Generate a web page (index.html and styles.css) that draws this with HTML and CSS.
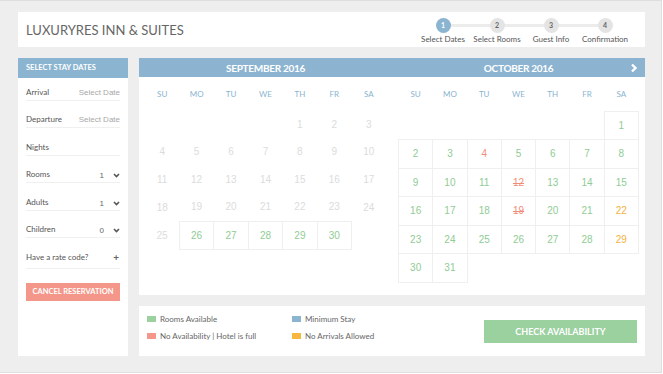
FILE: index.html
```html
<!DOCTYPE html>
<html lang="en">
<head>
  <meta charset="UTF-8">
  <title>LuxuryRes Inn &amp; Suites</title>
  <link rel="stylesheet" href="styles.css">
</head>
<body>
  <div class="page">
    <div class="header">
      <h1>LUXURYRES INN &amp; SUITES</h1>
      <div class="steps">
        <div class="step active"><span class="dot">1</span><span class="step-label">Select Dates</span></div>
        <div class="step"><span class="dot">2</span><span class="step-label">Select Rooms</span></div>
        <div class="step"><span class="dot">3</span><span class="step-label">Guest Info</span></div>
        <div class="step"><span class="dot">4</span><span class="step-label">Confirmation</span></div>
      </div>
    </div>

    <div class="main">
      <div class="sidebar">
        <div class="sidebar-title">SELECT STAY DATES</div>
        <div class="fields">
          <div class="field"><span>Arrival</span><span class="placeholder">Select Date</span></div>
          <div class="field"><span>Departure</span><span class="placeholder">Select Date</span></div>
          <div class="field"><span>Nights</span></div>
          <div class="field"><span>Rooms</span><span class="select">1 <svg width="7" height="5" viewBox="0 0 7 5"><path d="M1 1 L3.5 3.5 L6 1" fill="none" stroke="#555" stroke-width="1.6"/></svg></span></div>
          <div class="field"><span>Adults</span><span class="select">1 <svg width="7" height="5" viewBox="0 0 7 5"><path d="M1 1 L3.5 3.5 L6 1" fill="none" stroke="#555" stroke-width="1.6"/></svg></span></div>
          <div class="field"><span>Children</span><span class="select">0 <svg width="7" height="5" viewBox="0 0 7 5"><path d="M1 1 L3.5 3.5 L6 1" fill="none" stroke="#555" stroke-width="1.6"/></svg></span></div>
          <div class="field rate"><span>Have a rate code?</span><span class="plus">+</span></div>
          <button class="cancel">CANCEL RESERVATION</button>
        </div>
      </div>

      <div class="content">
        <div class="calendar">
          <div class="month">
            <div class="month-title"><span></span><span>SEPTEMBER 2016</span><span></span></div>
            <table class="days">
              <thead>
                <tr><th>SU</th><th>MO</th><th>TU</th><th>WE</th><th>TH</th><th>FR</th><th>SA</th></tr>
              </thead>
              <tbody>
                <tr><td></td><td></td><td></td><td></td><td class="off">1</td><td class="off">2</td><td class="off">3</td></tr>
                <tr><td class="off">4</td><td class="off">5</td><td class="off">6</td><td class="off">7</td><td class="off">8</td><td class="off">9</td><td class="off">10</td></tr>
                <tr><td class="off">11</td><td class="off">12</td><td class="off">13</td><td class="off">14</td><td class="off">15</td><td class="off">16</td><td class="off">17</td></tr>
                <tr><td class="off">18</td><td class="off">19</td><td class="off">20</td><td class="off">21</td><td class="off">22</td><td class="off">23</td><td class="off">24</td></tr>
                <tr><td class="off">25</td><td class="ok">26</td><td class="ok">27</td><td class="ok">28</td><td class="ok">29</td><td class="ok">30</td><td></td></tr>
              </tbody>
            </table>
          </div>
          <div class="month">
            <div class="month-title"><span></span><span>OCTOBER 2016</span><span class="next"><svg width="8" height="10" viewBox="0 0 8 10"><path d="M2 1.5 L5.5 5 L2 8.5" fill="none" stroke="#fff" stroke-width="2.4"/></svg></span></div>
            <table class="days">
              <thead>
                <tr><th>SU</th><th>MO</th><th>TU</th><th>WE</th><th>TH</th><th>FR</th><th>SA</th></tr>
              </thead>
              <tbody>
                <tr><td></td><td></td><td></td><td></td><td></td><td></td><td class="ok">1</td></tr>
                <tr><td class="ok">2</td><td class="ok">3</td><td class="full">4</td><td class="ok">5</td><td class="ok">6</td><td class="ok">7</td><td class="ok">8</td></tr>
                <tr><td class="ok">9</td><td class="ok">10</td><td class="ok">11</td><td class="full struck">12</td><td class="ok">13</td><td class="ok">14</td><td class="ok">15</td></tr>
                <tr><td class="ok">16</td><td class="ok">17</td><td class="ok">18</td><td class="full struck">19</td><td class="ok">20</td><td class="ok">21</td><td class="noarr">22</td></tr>
                <tr><td class="ok">23</td><td class="ok">24</td><td class="ok">25</td><td class="ok">26</td><td class="ok">27</td><td class="ok">28</td><td class="noarr">29</td></tr>
                <tr><td class="ok">30</td><td class="ok">31</td><td></td><td></td><td></td><td></td><td></td></tr>
              </tbody>
            </table>
          </div>
        </div>

        <div class="legend">
          <div class="keys">
            <span class="key"><i class="swatch green"></i>Rooms Available</span>
            <span class="key"><i class="swatch blue"></i>Minimum Stay</span>
            <span class="key"><i class="swatch red"></i>No Availability | Hotel is full</span>
            <span class="key"><i class="swatch orange"></i>No Arrivals Allowed</span>
          </div>
          <button class="check">CHECK AVAILABILITY</button>
        </div>
      </div>
    </div>
  </div>
</body>
</html>
```

FILE: styles.css
```css
body {
  margin: 0;
  font-family: Lato, "Open Sans", sans-serif;
  color: #555;
}
.page {
  box-sizing: border-box;
  width: 662px;
  height: 373px;
  padding: 11px 16px 0 18px;
  background: #eeeeee;
  border: 1px solid #dedede;
  border-left: none;
}

/* header */
.header {
  height: 35px;
  background: #fff;
  display: flex;
  align-items: center;
  justify-content: space-between;
  padding: 0 13px 0 8px;
}
h1 {
  margin: 0;
  font-size: 13px;
  font-weight: 400;
  color: #666;
}
.steps {
  display: flex;
  position: relative;
  margin-top: 2px;
}
.steps::before {
  content: "";
  position: absolute;
  left: 27px;
  right: 27px;
  top: 6px;
  height: 3px;
  background: #ececec;
}
.step {
  width: 54px;
  display: flex;
  flex-direction: column;
  align-items: center;
  position: relative;
}
.dot {
  width: 15px;
  height: 15px;
  border-radius: 50%;
  background: #e4e4e4;
  color: #666;
  font-size: 7px;
  font-weight: 700;
  line-height: 15px;
  text-align: center;
}
.step.active .dot {
  background: #8ab4d0;
  color: #fff;
}
.step-label {
  font-size: 8px;
  color: #555;
  margin-top: 1px;
  white-space: nowrap;
}

/* layout */
.main {
  display: flex;
  gap: 11px;
  margin-top: 11px;
}
.sidebar {
  width: 110px;
  height: 298px;
  background: #fff;
}
.sidebar-title {
  height: 20px;
  line-height: 20px;
  padding-left: 8px;
  background: #8ab4d0;
  color: #fff;
  font-size: 7.5px;
  font-weight: 700;
}
.fields {
  padding: 0 8px;
}
.field {
  display: flex;
  justify-content: space-between;
  align-items: center;
  height: 15px;
  line-height: 15px;
  padding-top: 11.5px;
  border-bottom: 1px solid #f0f0f0;
  font-size: 8px;
  color: #555;
}
.field:first-child {
  padding-top: 6.5px;
}
.field.rate {
  padding-top: 12px;
  padding-bottom: 2.5px;
}
.placeholder {
  font-family: "Liberation Sans", Arial, sans-serif;
  color: #a8a8a8;
  font-size: 8px;
}
.select {
  display: flex;
  align-items: center;
  gap: 9px;
  font-family: "Liberation Sans", Arial, sans-serif;
  font-size: 8px;
  color: #666;
  padding-top: 2px;
}
.plus {
  font-size: 10px;
  font-weight: 700;
  color: #666;
  padding-right: 1px;
}
.cancel {
  display: block;
  width: 94px;
  height: 18px;
  margin-top: 14px;
  padding: 0;
  border: none;
  background: #f4978a;
  color: #fff;
  font-family: Lato, sans-serif;
  font-size: 7.5px;
  font-weight: 700;
}

.content {
  width: 506px;
  display: flex;
  flex-direction: column;
  gap: 11px;
}

/* calendar */
.calendar {
  height: 237px;
  background: #fff;
  display: flex;
}
.month {
  width: 253px;
}
.month-title {
  display: grid;
  grid-template-columns: 1fr auto 1fr;
  align-items: center;
  height: 19px;
  background: #8cb4d0;
  color: #fff;
  font-size: 10px;
  font-weight: 700;
  letter-spacing: -0.3px;
}
.next {
  justify-self: end;
  padding-right: 7px;
  display: flex;
}
.days {
  width: 241px;
  margin: 0 6px;
  border-collapse: collapse;
  table-layout: fixed;
}
.days th {
  height: 33.5px;
  padding: 0;
  font-size: 8px;
  font-weight: 400;
  color: #8ab4d0;
  text-align: center;
}
.days td {
  height: 27.5px;
  padding: 0;
  text-align: center;
  font-family: "Liberation Sans", Arial, sans-serif;
  font-size: 10px;
}
.days td.off {
  color: #dcdcdc;
}
.days td.ok,
.days td.full,
.days td.noarr {
  border: 1px solid #efefef;
}
.ok { color: #8fcc94; }
.full { color: #f28c78; }
.noarr { color: #f5b13d; }
.struck { text-decoration: line-through; }

/* legend */
.legend {
  height: 50px;
  background: #fff;
  display: flex;
  align-items: center;
  padding: 0 8px;
}
.keys {
  align-self: flex-start;
  padding-top: 7px;
  display: grid;
  grid-template-columns: 145px auto;
  row-gap: 5px;
}
.key {
  display: flex;
  align-items: center;
  height: 12px;
  font-size: 8px;
  color: #666;
}
.swatch {
  width: 9px;
  height: 6px;
  margin-right: 4px;
}
.swatch.green { background: #9bd09f; }
.swatch.blue { background: #8ab4d0; }
.swatch.red { background: #f4978a; }
.swatch.orange { background: #f5b83d; }
.check {
  margin-left: auto;
  width: 153px;
  height: 23px;
  border: none;
  padding: 0;
  background: #9bd09f;
  color: #fff;
  font-family: Lato, sans-serif;
  font-size: 9px;
  font-weight: 700;
}
```
